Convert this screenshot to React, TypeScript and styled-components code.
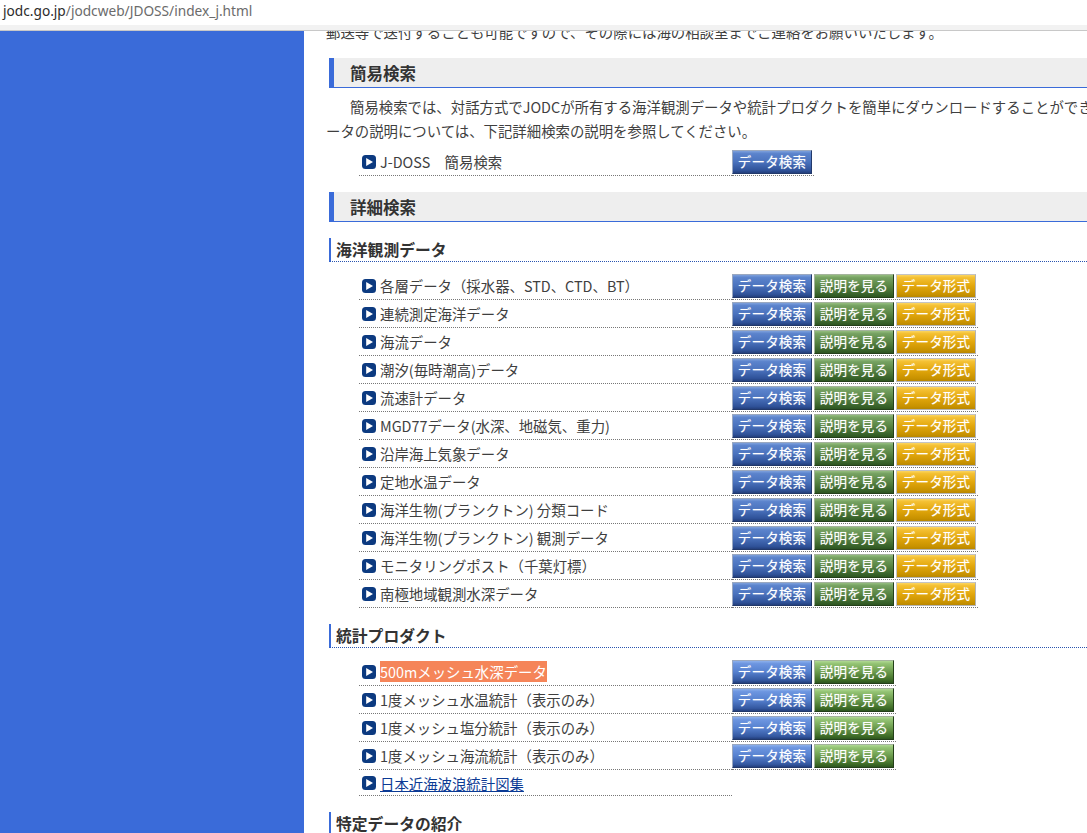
import React from "react";
import styled, { createGlobalStyle } from "styled-components";

const GlobalStyle = createGlobalStyle`
  html, body {
    margin: 0;
    padding: 0;
    height: 100%;
    overflow: hidden;
    background: #fff;
  }
`;

const Page = styled.div`
  display: flex;
  flex-direction: column;
  height: 833px;
  overflow: hidden;
  font-family: "Noto Sans CJK JP", "Noto Sans", sans-serif;
  font-size: 14.4px;
  color: #3f3f3f;
`;

const AddressBar = styled.div`
  flex: none;
  height: 25px;
  padding-left: 3px;
  background: #fff;
  font-family: "Noto Sans", sans-serif;
  font-size: 13.7px;
  line-height: 21px;
  color: #6b6b6b;
`;

const Host = styled.span`
  color: #2c2c2c;
`;

const BarStrip = styled.div`
  flex: none;
  height: 5px;
  background: #f2f2f2;
  border-bottom: 1px solid #c8c8c8;
`;

const Body = styled.div`
  flex: 1;
  display: flex;
  min-height: 0;
`;

const Sidebar = styled.aside`
  flex: none;
  width: 304px;
  background: #3a6bd9;
`;

const Main = styled.main`
  flex: 1;
  min-width: 0;
  overflow: hidden;
  padding-left: 22px;
`;

const ClippedLine = styled.p`
  margin: -11px 0 0;
  line-height: 24px;
  white-space: nowrap;
`;

const Heading = styled.h2<{ $top: number }>`
  margin: ${(p) => p.$top}px 0 0 3px;
  height: 29px;
  padding-left: 16px;
  background: #eee;
  border-left: 5px solid #3a6bd9;
  border-bottom: 1px solid #3a6bd9;
  font-size: 16.5px;
  font-weight: 700;
  line-height: 30px;
  color: #333;
`;

const SubHeading = styled.h3<{ $top: number }>`
  margin: ${(p) => p.$top}px 0 0 3px;
  height: 23px;
  padding-left: 5px;
  border-left: 2px solid #3a6bd9;
  border-bottom: 1px dotted #2a55b0;
  font-size: 15.8px;
  font-weight: 700;
  line-height: 24px;
  color: #333;
`;

const Paragraph = styled.p`
  margin: 7px 0 0;
  line-height: 24px;
  white-space: nowrap;
`;

const Indent = styled.span`
  padding-left: 24px;
`;

const RowList = styled.ul<{ $top: number }>`
  margin: ${(p) => p.$top}px 0 0 33px;
  padding: 0;
  list-style: none;
`;

const Row = styled.li<{ $short?: boolean }>`
  display: flex;
  height: ${(p) => (p.$short ? 26 : 28)}px;
`;

const NameCell = styled.div`
  flex: none;
  box-sizing: border-box;
  width: 373px;
  display: flex;
  align-items: center;
  gap: 4px;
  padding-left: 3px;
  border-bottom: 1px dotted #777;
`;

const ButtonCell = styled.div`
  display: flex;
  align-items: center;
  gap: 2px;
  padding-right: 2px;
  border-bottom: 1px dotted #777;
`;

const Mark = styled.svg`
  flex: none;
  width: 14px;
  height: 14px;
`;

const Highlight = styled.span`
  background: #f58559;
  color: #fff;
  line-height: 21px;
`;

const DocLink = styled.a`
  margin-top: 2px;
  color: #0b3a94;
  text-decoration: underline;
`;

const tones = {
  blue: {
    edge: "#22396b",
    light: "#9aa8c0",
    face: "linear-gradient(#7da0dc 0, #5b83cc 12%, #4a72bd 50%, #2f5299 88%, #233f7c 100%)",
  },
  blueLight: {
    edge: "#22396b",
    light: "#9aa8c0",
    face: "linear-gradient(#8cb0ec 0, #6d96e0 12%, #5580cf 50%, #3458a0 88%, #233f7c 100%)",
  },
  green: {
    edge: "#24401a",
    light: "#a4b49c",
    face: "linear-gradient(#94bd7e 0, #76a262 12%, #588443 50%, #38622a 88%, #2d5520 100%)",
  },
  greenLight: {
    edge: "#24401a",
    light: "#a4b49c",
    face: "linear-gradient(#b0d994 0, #94c474 12%, #6a9a4c 50%, #3d6b26 88%, #2d5520 100%)",
  },
  gold: {
    edge: "#b4b4b4",
    light: "#c4c4c4",
    face: "linear-gradient(#fbd560 0, #f4c032 12%, #e2a70c 50%, #c89200 88%, #b98700 100%)",
  },
};

type Tone = keyof typeof tones;

const Btn = styled.a<{ $tone: Tone }>`
  box-sizing: border-box;
  display: block;
  width: 80px;
  height: 24px;
  border: 1px solid ${(p) => tones[p.$tone].edge};
  border-left-color: ${(p) => tones[p.$tone].light};
  border-top-color: ${(p) => tones[p.$tone].light};
  background: ${(p) => tones[p.$tone].face};
  color: #fff;
  font-size: 13.5px;
  letter-spacing: 0.2px;
  line-height: 21px;
  text-align: center;
  text-shadow: 0 0 1px rgba(255, 255, 255, 0.45);
  white-space: nowrap;
`;

const Play = () => (
  <Mark viewBox="0 0 14 14">
    <rect width="14" height="14" rx="3.5" fill="#0c3a80" />
    <path d="M4.2 3 L11 7 L4.2 11 Z" fill="#fff" />
  </Mark>
);

const observations = [
  "各層データ（採水器、STD、CTD、BT）",
  "連続測定海洋データ",
  "海流データ",
  "潮汐(毎時潮高)データ",
  "流速計データ",
  "MGD77データ(水深、地磁気、重力)",
  "沿岸海上気象データ",
  "定地水温データ",
  "海洋生物(プランクトン) 分類コード",
  "海洋生物(プランクトン) 観測データ",
  "モニタリングポスト（千葉灯標）",
  "南極地域観測水深データ",
];

const meshes = [
  "1度メッシュ水温統計（表示のみ）",
  "1度メッシュ塩分統計（表示のみ）",
  "1度メッシュ海流統計（表示のみ）",
];

export default function App() {
  return (
    <>
      <GlobalStyle />
      <Page>
        <AddressBar>
          <Host>jodc.go.jp</Host>/jodcweb/JDOSS/index_j.html
        </AddressBar>
        <BarStrip />
        <Body>
          <Sidebar />
          <Main>
            <ClippedLine>郵送等で送付することも可能ですので、その際には海の相談室までご連絡をお願いいたします。</ClippedLine>
            <Heading $top={14}>簡易検索</Heading>
            <Paragraph>
              <Indent>簡易検索では、対話方式でJODCが所有する海洋観測データや統計プロダクトを簡単にダウンロードすることができます。デ</Indent>
              <br />
              ータの説明については、下記詳細検索の説明を参照してください。
            </Paragraph>
            <RowList $top={5}>
              <Row>
                <NameCell>
                  <Play />
                  <span>J-DOSS　簡易検索</span>
                </NameCell>
                <ButtonCell>
                  <Btn $tone="blue">データ検索</Btn>
                </ButtonCell>
              </Row>
            </RowList>
            <Heading $top={16}>詳細検索</Heading>
            <SubHeading $top={16}>海洋観測データ</SubHeading>
            <RowList $top={10}>
              {observations.map((name) => (
                <Row key={name}>
                  <NameCell>
                    <Play />
                    <span>{name}</span>
                  </NameCell>
                  <ButtonCell>
                    <Btn $tone="blue">データ検索</Btn>
                    <Btn $tone="green">説明を見る</Btn>
                    <Btn $tone="gold">データ形式</Btn>
                  </ButtonCell>
                </Row>
              ))}
            </RowList>
            <SubHeading $top={16}>統計プロダクト</SubHeading>
            <RowList $top={10}>
              <Row>
                <NameCell>
                  <Play />
                  <Highlight>500mメッシュ水深データ</Highlight>
                </NameCell>
                <ButtonCell>
                  <Btn $tone="blueLight">データ検索</Btn>
                  <Btn $tone="greenLight">説明を見る</Btn>
                </ButtonCell>
              </Row>
              {meshes.map((name) => (
                <Row key={name}>
                  <NameCell>
                    <Play />
                    <span>{name}</span>
                  </NameCell>
                  <ButtonCell>
                    <Btn $tone="blueLight">データ検索</Btn>
                    <Btn $tone="greenLight">説明を見る</Btn>
                  </ButtonCell>
                </Row>
              ))}
              <Row $short>
                <NameCell>
                  <Play />
                  <DocLink>日本近海波浪統計図集</DocLink>
                </NameCell>
              </Row>
            </RowList>
            <SubHeading $top={16}>特定データの紹介</SubHeading>
          </Main>
        </Body>
      </Page>
    </>
  );
}
